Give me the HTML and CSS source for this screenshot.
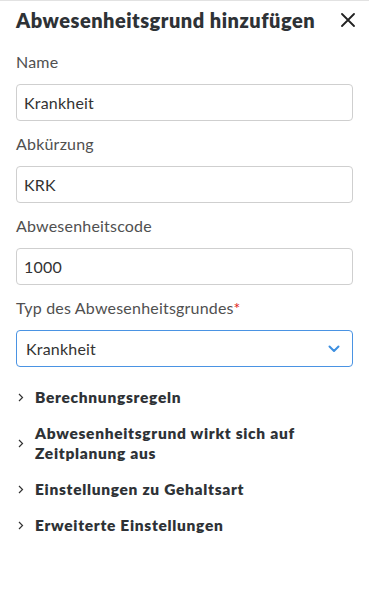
FILE: index.html
```html
<!DOCTYPE html>
<html lang="de">
<head>
    <meta charset="UTF-8">
    <meta name="viewport" content="width=device-width, initial-scale=1.0">
    <title>Abwesenheitsgrund hinzufügen</title>
    <link rel="stylesheet" href="styles.css">
</head>
<body>

<div class="panel">
    <div class="panel-header">
        <h1>Abwesenheitsgrund hinzufügen</h1>
        <button class="close" aria-label="Schließen">
            <svg width="14" height="14" viewBox="0 0 14 14"><path d="M1 1L13 13M13 1L1 13" stroke="#222" stroke-width="1.8" stroke-linecap="round"/></svg>
        </button>
    </div>

    <div class="field">
        <label for="name">Name</label>
        <input type="text" id="name" value="Krankheit">
    </div>
    <div class="field">
        <label for="short">Abkürzung</label>
        <input type="text" id="short" value="KRK">
    </div>
    <div class="field">
        <label for="code">Abwesenheitscode</label>
        <input type="text" id="code" value="1000">
    </div>
    <div class="field">
        <label for="type">Typ des Abwesenheitsgrundes<span class="req">*</span></label>
        <div class="select">
            <span>Krankheit</span>
            <svg width="12" height="8" viewBox="0 0 12 8"><path d="M1.5 1.5L6 6L10.5 1.5" fill="none" stroke="#3d8fe0" stroke-width="2" stroke-linecap="round" stroke-linejoin="round"/></svg>
        </div>
    </div>

    <ul class="sections">
        <li><svg class="arrow" width="6" height="9" viewBox="0 0 6 9"><path d="M1 1L4.5 4.5L1 8" fill="none" stroke="#333" stroke-width="1.2"/></svg><span>Berechnungsregeln</span></li>
        <li><svg class="arrow" width="6" height="9" viewBox="0 0 6 9"><path d="M1 1L4.5 4.5L1 8" fill="none" stroke="#333" stroke-width="1.2"/></svg><span>Abwesenheitsgrund wirkt sich auf Zeitplanung aus</span></li>
        <li><svg class="arrow" width="6" height="9" viewBox="0 0 6 9"><path d="M1 1L4.5 4.5L1 8" fill="none" stroke="#333" stroke-width="1.2"/></svg><span>Einstellungen zu Gehaltsart</span></li>
        <li><svg class="arrow" width="6" height="9" viewBox="0 0 6 9"><path d="M1 1L4.5 4.5L1 8" fill="none" stroke="#333" stroke-width="1.2"/></svg><span>Erweiterte Einstellungen</span></li>
    </ul>
</div>

</body>
</html>
```

FILE: styles.css
```css
body {
    margin: 0;
    font-family: Lato, "Open Sans", sans-serif;
    background-color: #fff;
    color: #333;
}
.panel {
    border-top: 1px solid #e2e2e2;
    padding: 0 16px 0 16px;
}
.panel-header {
    display: flex;
    justify-content: space-between;
    align-items: center;
    height: 38px;
}
.panel-header h1 {
    margin: 0;
    font-size: 20px;
    font-weight: 800;
    color: #2e3236;
    letter-spacing: 0.5px;
    white-space: nowrap;
}
.close {
    border: none;
    background: none;
    padding: 0;
    margin-right: -2px;
    display: flex;
}
.field {
    display: flex;
    flex-direction: column;
}
.field label {
    font-size: 16px;
    letter-spacing: 0.2px;
    color: #505050;
    height: 45px;
    line-height: 46px;
}
.req {
    color: #e02020;
}
.field input,
.select {
    box-sizing: border-box;
    height: 37px;
    border: 1px solid #cfcfcf;
    border-radius: 4px;
    padding: 0 7px;
    font-family: inherit;
    font-size: 16px;
    letter-spacing: 0.2px;
    color: #333;
    outline: none;
}
.select {
    display: flex;
    align-items: center;
    justify-content: space-between;
    border-color: #4a93e3;
    padding: 0 12px 0 9px;
}
.sections {
    list-style: none;
    margin: 0;
    padding: 20px 0 0 0;
}
.sections li {
    display: flex;
    align-items: center;
    font-size: 15.5px;
    font-weight: 800;
    letter-spacing: 0.7px;
    color: #2e3236;
    line-height: 20px;
    margin-bottom: 16px;
}
.arrow {
    flex-shrink: 0;
    margin: 0 11px 0 2px;
}
```
